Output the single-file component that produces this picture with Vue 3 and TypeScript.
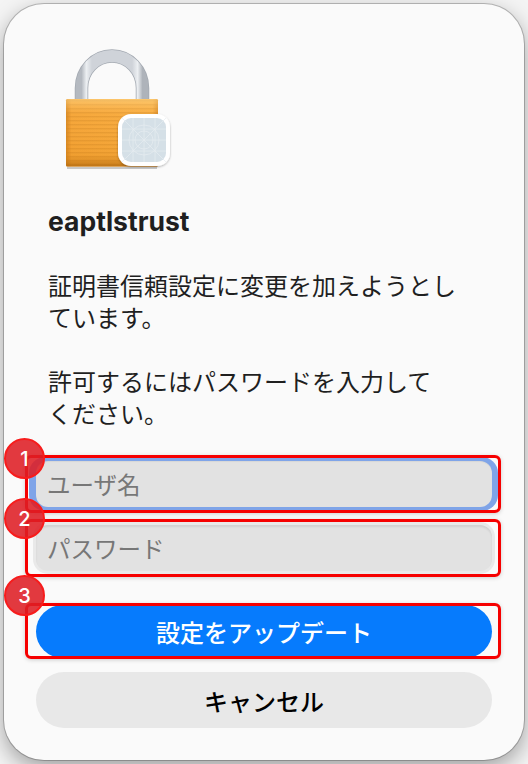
<script setup lang="ts">
const message = ['証明書信頼設定に変更を加えようとし\nています。', '許可するにはパスワードを入力して\nください。']
</script>

<template>
  <main class="dialog">
    <svg class="lock" width="130" height="130" viewBox="48 44 130 130" aria-hidden="true">
      <defs>
        <linearGradient id="shackle" x1="0" y1="0" x2="1" y2="0">
          <stop offset="0" stop-color="#b4b9c0" />
          <stop offset="0.08" stop-color="#eceff2" />
          <stop offset="0.17" stop-color="#cfd3d9" />
          <stop offset="0.83" stop-color="#cfd3d9" />
          <stop offset="0.92" stop-color="#eceff2" />
          <stop offset="1" stop-color="#aeb3ba" />
        </linearGradient>
        <linearGradient id="body" x1="0" y1="0" x2="1" y2="0">
          <stop offset="0" stop-color="#d5831c" />
          <stop offset="0.06" stop-color="#f5a334" />
          <stop offset="0.94" stop-color="#f8ac3e" />
          <stop offset="1" stop-color="#d98a24" />
        </linearGradient>
        <linearGradient id="shade" x1="0" y1="0" x2="0" y2="1">
          <stop offset="0" stop-color="#ffd98c" stop-opacity="0.6" />
          <stop offset="0.22" stop-color="#ffc670" stop-opacity="0.12" />
          <stop offset="0.82" stop-color="#e08e22" stop-opacity="0.2" />
          <stop offset="1" stop-color="#b0680e" stop-opacity="0.8" />
        </linearGradient>
        <pattern id="stripes" width="4" height="4" patternUnits="userSpaceOnUse">
          <rect width="4" height="1.4" fill="#c97f1c" fill-opacity="0.35" />
        </pattern>
        <filter id="soft" x="-20%" y="-20%" width="140%" height="140%">
          <feDropShadow dx="0" dy="1" stdDeviation="1.2" flood-color="#000" flood-opacity="0.3" />
        </filter>
      </defs>
      <path d="M81.5 100V88a30.5 32 0 0 1 61 0v12" fill="none" stroke="#a2a8b0" stroke-width="13.5" />
      <path d="M81.5 100V88a30.5 32 0 0 1 61 0v12" fill="none" stroke="url(#shackle)" stroke-width="12" />
      <rect x="67" y="167" width="90" height="2" fill="#555" fill-opacity="0.3" />
      <rect x="66" y="99" width="92" height="67.5" rx="1.5" fill="url(#body)" />
      <rect x="66" y="99" width="92" height="67.5" rx="1.5" fill="url(#stripes)" />
      <rect x="66" y="99" width="92" height="67.5" rx="1.5" fill="url(#shade)" />
      <rect x="118" y="114" width="52" height="52" rx="13" fill="#fff" filter="url(#soft)" />
      <rect x="122" y="118" width="44" height="44" rx="9" fill="#d5e0e7" />
      <g fill="none" stroke="#e6edf1" stroke-width="0.7">
        <path d="M122 118l44 44M166 118l-44 44M133 118v44M155 118v44M122 129h44M122 151h44M144 118v44M122 140h44" />
        <circle cx="144" cy="140" r="15" />
        <circle cx="144" cy="140" r="9" />
      </g>
    </svg>

    <h1 class="title">eaptlstrust</h1>
    <div class="message">
      <p v-for="line in message" :key="line">{{ line }}</p>
    </div>

    <div class="field-row first">
      <input class="field focused" type="text" placeholder="ユーザ名" />
      <span class="box"></span>
      <span class="pin">1</span>
    </div>
    <div class="field-row second">
      <input class="field" type="password" placeholder="パスワード" />
      <span class="box"></span>
      <span class="pin">2</span>
    </div>
    <div class="field-row third">
      <button class="btn primary" type="button">設定をアップデート</button>
      <span class="box"></span>
      <span class="pin">3</span>
    </div>
    <button class="btn cancel" type="button">キャンセル</button>
  </main>
</template>

<style>
html,
body {
  background: #f4f4f4;
  overflow: hidden;
}
</style>

<style scoped>
.dialog {
  box-sizing: border-box;
  width: 520px;
  height: 756px;
  margin: 4px;
  padding: 40px 32px 0;
  display: flex;
  flex-direction: column;
  background: #fafafa;
  border-radius: 40px;
  box-shadow:
    0 0 0 1px rgba(0, 0, 0, 0.22),
    0 8px 22px rgba(0, 0, 0, 0.35);
  font-family: Inter, "Noto Sans CJK JP", sans-serif;
  color: #1f1f1f;
}

.lock {
  display: block;
  margin-left: 12px;
  flex: none;
}

.title {
  margin: 31px 0 0 12px;
  font-size: 26.5px;
  line-height: 32px;
  font-weight: 700;
}

.message {
  margin: 32px 0 0 12px;
  font-family: "Noto Sans CJK JP", sans-serif;
  font-size: 24px;
  line-height: 32px;
}

.message p {
  margin: 0 0 32px;
  white-space: pre-line;
}

.field-row {
  position: relative;
}

.second {
  margin-top: 18px;
}

.third {
  margin-top: 34px;
}

.field {
  display: block;
  box-sizing: border-box;
  width: 100%;
  height: 46px;
  padding: 0 11px;
  border: 0;
  border-radius: 12px;
  outline: none;
  background: #e2e2e2;
  box-shadow:
    0 0 0 3px #e9e9e9,
    inset 0 2px 2px rgba(0, 0, 0, 0.08);
  font-family: "Noto Sans CJK JP", sans-serif;
  font-size: 23.5px;
  color: #333;
}

.field::placeholder {
  color: #777;
  opacity: 1;
}

.field.focused {
  box-shadow:
    -3px 0 0 4px #7fa4e8,
    2px 0 0 4px #7fa4e8,
    0 -1px 0 3px #7092d4,
    0 1px 0 3px #7092d4,
    inset 0 1px 1px rgba(0, 0, 0, 0.05);
}

.btn {
  display: block;
  width: 100%;
  border: 0;
  padding: 0;
  font-family: "Noto Sans CJK JP", sans-serif;
  font-size: 24px;
  font-weight: 500;
}

.primary {
  height: 53px;
  border-radius: 27px;
  background: #067bfd;
  color: #fff;
}

.cancel {
  height: 56px;
  margin-top: 14px;
  border-radius: 28px;
  background: #e8e8e8;
  color: #000;
}

.box {
  position: absolute;
  left: -11px;
  right: -9px;
  top: -6px;
  bottom: -6px;
  border: 3px solid #f60000;
  border-radius: 6px;
  box-shadow: 0 1px 4px rgba(0, 0, 0, 0.18);
  pointer-events: none;
}

.third .box {
  top: -2px;
  bottom: -1px;
}

.pin {
  position: absolute;
  left: -32px;
  top: -23px;
  box-sizing: border-box;
  width: 41px;
  height: 41px;
  display: flex;
  align-items: center;
  justify-content: center;
  border: 2px solid #f71c1c;
  border-radius: 50%;
  background: rgba(222, 30, 36, 0.88);
  color: #fff;
  font-family: Inter, sans-serif;
  font-size: 20px;
  font-weight: 500;
}

.second .pin {
  top: -27px;
}

.third .pin {
  top: -30px;
}
</style>
